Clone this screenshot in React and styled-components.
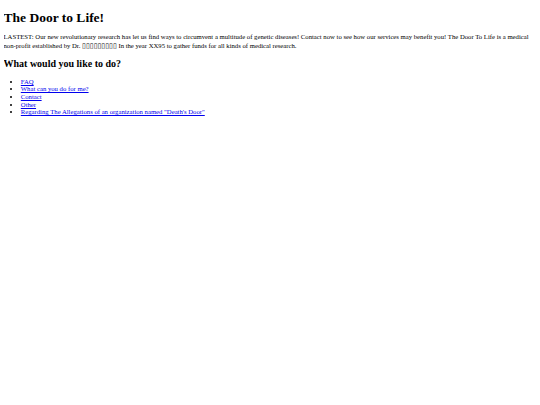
import React from "react";
import styled, { createGlobalStyle } from "styled-components";

const GlobalStyle = createGlobalStyle`
  body {
    margin: 3.5px;
    background: #fff;
    color: #000;
    font-family: "Liberation Serif", "Times New Roman", serif;
    font-size: 6.7px;
  }
`;

const Title = styled.h1`
  font-size: 13.5px;
  line-height: 15.5px;
  font-weight: bold;
  margin: 6.2px 0 8.3px;
`;

const Notice = styled.p`
  line-height: 8.4px;
  margin: 8.3px 0 7.8px;
`;

const Hidden = styled.span`
  font-family: "DejaVu Sans", sans-serif;
  font-size: 7px;
`;

const SubTitle = styled.h2`
  font-size: 10px;
  line-height: 11.5px;
  font-weight: bold;
  margin: 7.8px 0 8px;
`;

const Menu = styled.ul`
  margin: 8px 0;
  padding-left: 17.3px;
  line-height: 7.7px;
  list-style: disc;
`;

const MenuLink = styled.a`
  color: #0000ee;
  text-decoration: underline;
`;

const links = [
  "FAQ",
  "What can you do for me?",
  "Contact",
  "Other",
  'Regarding The Allegations of an organization named "Death\'s Door"',
];

export default function App() {
  return (
    <>
      <GlobalStyle />
      <Title>The Door to Life!</Title>
      <Notice>
        LASTEST: Our new revolutionary research has let us find ways to
        circumvent a multitude of genetic diseases! Contact now to see how our
        services may benefit you! The Door To Life is a medical non-profit
        established by Dr. <Hidden>▯▯▯▯▯▯▯▯▯</Hidden> In the year XX95 to
        gather funds for all kinds of medical research.
      </Notice>
      <SubTitle>What would you like to do?</SubTitle>
      <Menu>
        {links.map((label) => (
          <li key={label}>
            <MenuLink href="#">{label}</MenuLink>
          </li>
        ))}
      </Menu>
    </>
  );
}
